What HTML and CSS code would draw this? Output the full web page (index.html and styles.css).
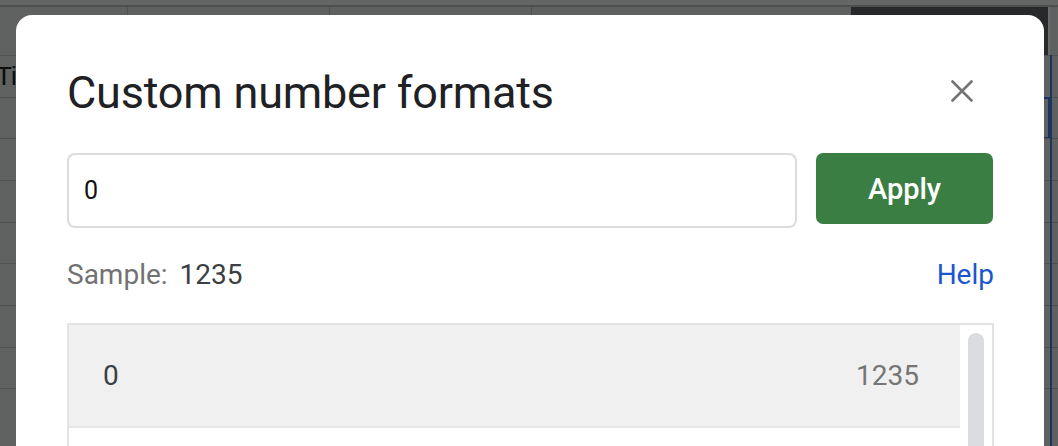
FILE: index.html
```html
<!DOCTYPE html>
<html>
<head>
<meta charset="utf-8">
<link rel="stylesheet" href="styles.css">
</head>
<body>
<div class="sheet">
  <div class="topbar"></div>
  <div class="colheads">
    <div class="colhead c1"></div>
    <div class="colhead c2"></div>
    <div class="colhead c3"></div>
    <div class="colhead c4"></div>
    <div class="colhead c5 selected"></div>
    <div class="colhead c6"></div>
  </div>
  <div class="rows">
    <div class="row"><span class="cell-text">Time</span></div>
    <div class="row"><span class="sel-box"></span></div>
    <div class="row"></div>
    <div class="row"></div>
    <div class="row"></div>
    <div class="row"></div>
    <div class="row"></div>
    <div class="row"></div>
    <div class="row"></div>
  </div>
  <div class="blue-line"></div>
</div>

<div class="dialog">
  <div class="dlg-header">
    <h1 class="dlg-title">Custom number formats</h1>
    <button class="close-btn" aria-label="Close">
      <svg width="22" height="22" viewBox="0 0 22 22"><path d="M1.5 1.5 L20.5 20.5 M20.5 1.5 L1.5 20.5" stroke="#747474" stroke-width="2.6" stroke-linecap="round" fill="none"/></svg>
    </button>
  </div>
  <div class="input-row">
    <input class="fmt-input" type="text" value="0">
    <button class="apply-btn">Apply</button>
  </div>
  <div class="sample-row">
    <div class="sample"><span class="sample-label">Sample:</span><span class="sample-value">1235</span></div>
    <a class="help" href="#">Help</a>
  </div>
  <div class="list">
    <div class="list-items">
      <div class="item active"><span class="item-fmt">0</span><span class="item-sample">1235</span></div>
      <div class="item"><span class="item-fmt"></span><span class="item-sample"></span></div>
    </div>
    <div class="scroll-track"><div class="scroll-thumb"></div></div>
  </div>
</div>
</body>
</html>
```

FILE: styles.css
```css
* { box-sizing: border-box; }
html, body {
  margin: 0;
  padding: 0;
  width: 1058px;
  height: 446px;
  overflow: hidden;
  background: #5f6060;
  font-family: Roboto, "Liberation Sans", sans-serif;
}
.sheet {
  position: relative;
  width: 1058px;
  height: 446px;
}
.topbar {
  height: 7px;
  background: #646565;
  border-bottom: 2px solid #4d4e4e;
}
.colheads {
  display: flex;
  height: 48px;
}
.colhead {
  border-right: 1px solid #4f5050;
}
.c1 { width: 128px; }
.c2 { width: 202px; }
.c3 { width: 202px; }
.c4 { width: 319px; border-right: none; }
.c5 { width: 199px; }
.c6 { flex: 1; border-right: none; }
.colhead.selected { background: #28292a; border-right: 2px solid #6a6b6b; }
.rows {
  display: flex;
  flex-direction: column;
}
.row {
  position: relative;
  height: 41.67px;
  border-top: 1px solid #4f5050;
}
.cell-text {
  position: absolute;
  left: -4px;
  top: 5px;
  font-family: "Liberation Sans", Arial, sans-serif;
  font-size: 26px;
  color: #0c0c0c;
}
.sel-box {
  position: absolute;
  left: 900px;
  width: 150px;
  top: -1px;
  height: 42px;
  border: 2px solid #1c3462;
  border-left: none;
}
.blue-line {
  position: absolute;
  left: 1050px;
  top: 55px;
  width: 2px;
  height: 400px;
  background: #1c3462;
}

.dialog {
  position: absolute;
  left: 16px;
  top: 15px;
  width: 1028px;
  height: 500px;
  background: #fff;
  border-radius: 16px;
  padding: 52px 50px 0 51px;
}
.dlg-header {
  display: flex;
  align-items: center;
  justify-content: space-between;
  height: 52px;
}
.dlg-title {
  margin: 0;
  font-family: Roboto, "Open Sans", sans-serif;
  font-weight: 400;
  font-size: 45px;
  letter-spacing: -0.2px;
  line-height: 52px;
  color: #202124;
}
.close-btn {
  border: none;
  background: transparent;
  padding: 0;
  margin: 0 21px 4px 0;
  width: 22px;
  height: 22px;
  display: flex;
}
.input-row {
  display: flex;
  align-items: flex-start;
  gap: 19px;
  margin-top: 34px;
}
.fmt-input {
  width: 730px;
  height: 75px;
  border: 2px solid #dadce0;
  border-radius: 8px;
  padding: 0 15px;
  font-family: Roboto, sans-serif;
  font-size: 25px;
  color: #111;
  outline: none;
}
.apply-btn {
  width: 177px;
  height: 71px;
  border: none;
  border-radius: 7px;
  background: #3b7e44;
  color: #fff;
  font-family: Roboto, sans-serif;
  font-weight: 500;
  font-size: 29px;
}
.sample-row {
  display: flex;
  justify-content: space-between;
  align-items: baseline;
  margin-top: 31px;
  font-size: 28px;
  line-height: 32px;
}
.sample-label { color: #727272; }
.sample-value { color: #3c4043; margin-left: 12px; }
.help {
  color: #1c55cc;
  text-decoration: none;
}
.list {
  display: flex;
  margin-top: 32px;
  border: 2px solid #e3e3e3;
  height: 300px;
}
.list-items {
  flex: 1;
  display: flex;
  flex-direction: column;
}
.item {
  display: flex;
  align-items: center;
  justify-content: space-between;
  height: 103px;
  padding: 0 41px 0 34px;
  font-size: 28px;
  border-bottom: 2px solid #e6e6e6;
}
.item.active { background: #f0f0f0; }
.item-fmt { color: #3c4043; }
.item-sample { color: #757575; }
.scroll-track {
  width: 32px;
  padding: 8px 8px 0;
}
.scroll-thumb {
  width: 16px;
  height: 300px;
  border-radius: 8px;
  background: #dadce0;
}
```
